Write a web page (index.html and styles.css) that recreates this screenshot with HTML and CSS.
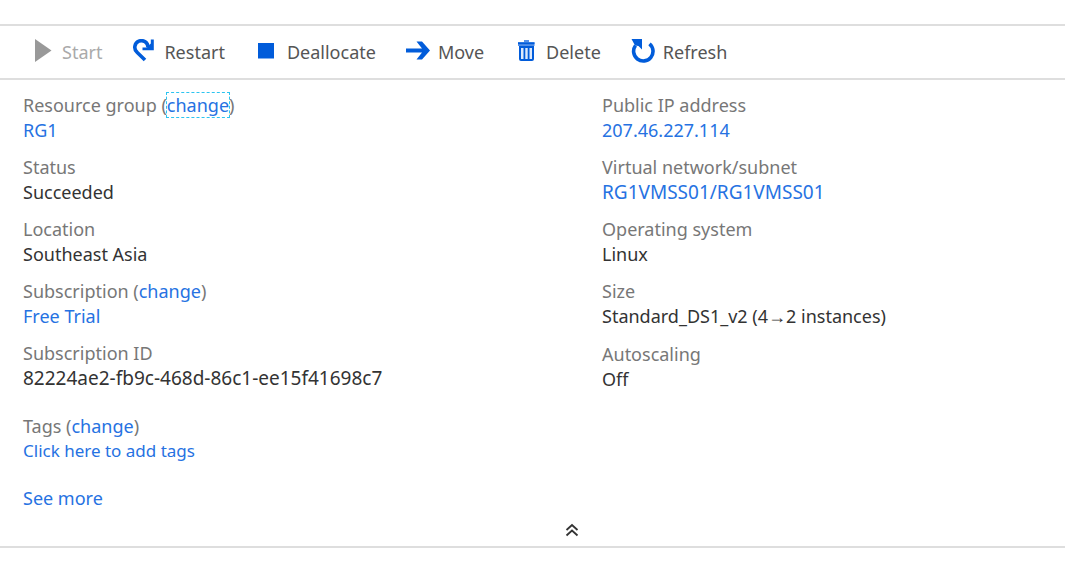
FILE: index.html
```html
<!DOCTYPE html>
<html lang="en">
<head>
<meta charset="utf-8">
<meta name="viewport" content="width=device-width, initial-scale=1">
<title>RG1VMSS01</title>
<link rel="stylesheet" href="styles.css">
</head>
<body>
<main class="blade">
  <div class="toolbar" role="toolbar" aria-label="Scale set commands">
    <button class="command" type="button" disabled>
      <svg class="icon" viewBox="0 0 24 24" aria-hidden="true"><path d="M5 0L21.500 11.500L5 23Z" fill="#999"/></svg>
      <span>Start</span>
    </button>
    <button class="command" type="button">
      <svg class="icon" viewBox="0 0 24 24" aria-hidden="true"><path d="M13 21L5 13.200A6.600 6.600 0 1 1 16 8.500" fill="none" stroke="#015cda" stroke-width="3.600"/><path d="M21.800 0.500V11.300H10.500V8.500H15L18.800 4.500V0.500Z" fill="#015cda"/></svg>
      <span>Restart</span>
    </button>
    <button class="command" type="button">
      <svg class="icon" viewBox="0 0 24 24" aria-hidden="true"><path d="M3 4H19V19.500H3Z" fill="#015cda"/></svg>
      <span>Deallocate</span>
    </button>
    <button class="command" type="button">
      <svg class="icon" viewBox="0 0 24 24" aria-hidden="true"><path d="M0 9.500H16L10.500 2.500H16L24 11.500L16 20.500H10.500L16 13.500H0Z" fill="#015cda"/></svg>
      <span>Move</span>
    </button>
    <button class="command" type="button">
      <svg class="icon" viewBox="0 0 24 24" aria-hidden="true"><path d="M10 1H15V3H20.500V7H4V3H10Z" fill="#5591e8"/><path d="M4 3.500H20.500V5.200H4Z" fill="#015cda"/><path d="M6 8V20Q6 21 7 21H18Q19 21 19 20V8Z" fill="#dce9fc" stroke="#015cda" stroke-width="2"/><path d="M10.400 8V20M14.600 8V20" stroke="#015cda" stroke-width="1.800"/></svg>
      <span>Delete</span>
    </button>
    <button class="command" type="button">
      <svg class="icon" viewBox="0 0 24 24" aria-hidden="true"><path d="M4.500 6.500A9.700 9.700 0 1 0 18.500 4.800" fill="none" stroke="#015cda" stroke-width="3.600"/><path d="M0.500 0H11V10.500L7.500 7L4 6.500Z" fill="#015cda"/></svg>
      <span>Refresh</span>
    </button>
  </div>

  <section class="essentials">
    <div class="columns">
      <dl class="properties">
        <div><dt>Resource group (<a class="focused" href="#group">change</a>)</dt><dd><a href="#rg1">RG1</a></dd></div>
        <div><dt>Status</dt><dd>Succeeded</dd></div>
        <div><dt>Location</dt><dd>Southeast Asia</dd></div>
        <div><dt>Subscription (<a href="#subscription">change</a>)</dt><dd><a href="#trial">Free Trial</a></dd></div>
        <div><dt>Subscription ID</dt><dd class="identifier">82224ae2-fb9c-468d-86c1-ee15f41698c7</dd></div>
      </dl>
      <dl class="properties">
        <div><dt>Public IP address</dt><dd><a href="#ip">207.46.227.114</a></dd></div>
        <div><dt>Virtual network/subnet</dt><dd class="identifier"><a href="#subnet">RG1VMSS01/RG1VMSS01</a></dd></div>
        <div><dt>Operating system</dt><dd>Linux</dd></div>
        <div><dt>Size</dt><dd>Standard_DS1_v2 (4<span class="arrow">→</span>2 instances)</dd></div>
        <div><dt>Autoscaling</dt><dd>Off</dd></div>
      </dl>
    </div>
    <dl class="properties tags">
      <div><dt>Tags (<a href="#tags">change</a>)</dt><dd class="hint"><a href="#add-tags">Click here to add tags</a></dd></div>
    </dl>
    <a class="more" href="#more">See more</a>
    <button class="collapse" type="button" aria-label="Collapse essentials">
      <svg class="chevrons" viewBox="0 0 14 14" aria-hidden="true"><path d="M1.500 7L7 2L12.500 7M1.500 12.500L7 7.500L12.500 12.500" fill="none" stroke="#333" stroke-width="1.800"/></svg>
    </button>
  </section>
</main>
</body>
</html>
```
FILE: styles.css
```css
body {
  margin: 0;
  background: #fff;
  color: #333;
  font: 18px/25px "Noto Sans", "Open Sans", sans-serif;
}

.blade {
  margin-top: 24px;
  border-top: 2px solid #dedede;
  border-bottom: 2px solid #dedede;
}

.toolbar {
  display: flex;
  flex-wrap: wrap;
  gap: 30px;
  padding: 13px 30px;
  border-bottom: 2px solid #dedede;
}

.command {
  display: flex;
  align-items: flex-start;
  gap: 8px;
  padding: 0;
  border: 0;
  background: none;
  color: #555;
  font: inherit;
}

.command span {
  padding-top: 1px;
}

.command:disabled {
  color: #aaa;
}

.icon {
  width: 24px;
  height: 24px;
}

.essentials {
  display: flex;
  flex-direction: column;
  padding: 13px 23px 9px;
}

.columns {
  display: grid;
  grid-template-columns: 579fr 440fr;
}

.properties {
  display: flex;
  flex-direction: column;
  gap: 12px;
  margin: 0;
}

.tags {
  margin-top: 22px;
}

dt {
  color: #777;
}

dd {
  margin: 0;
}

.identifier {
  font-size: 19px;
}

.hint {
  font-size: 17px;
  line-height: 23px;
}

a {
  color: #2672e2;
  text-decoration: none;
}

.focused {
  outline: 1px dashed #2cc4f0;
}

.arrow {
  font-family: "Liberation Sans", sans-serif;
}

.more {
  align-self: flex-start;
  margin-top: 24px;
}

.collapse {
  align-self: center;
  display: flex;
  margin-top: 12px;
  margin-left: 78px;
  padding: 0;
  border: 0;
  background: none;
}

.chevrons {
  width: 14px;
  height: 14px;
}
```
